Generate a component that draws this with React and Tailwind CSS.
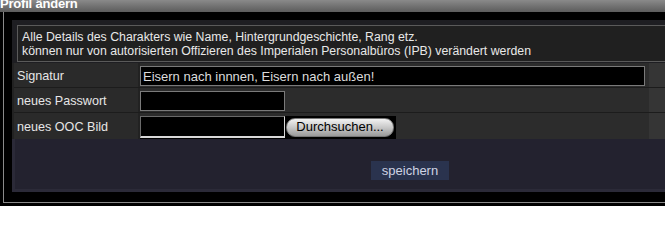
import React from 'react';

const font = { fontFamily: '"Liberation Sans", Arial, sans-serif' };

function Row({ label, children, last }) {
    return (
        <div className={`flex h-[25px] ${last ? 'h-[26px]' : 'border-b border-[#1c1c1c]'}`}>
            <div className="w-[124px] shrink-0 bg-[#2a2a2a] pl-[3px] pt-[2px] flex items-center text-[12.6px] text-[#e6e6e6]">
                {label}
            </div>
            <div className="w-[2px] shrink-0 bg-[#222]" />
            <div className="w-[509px] shrink-0 bg-[#2c2c2c] flex items-center">
                {children}
            </div>
            <div className="flex-1 bg-[#353535]" />
        </div>
    );
}

export default function App() {
    return (
        <div className="w-[665px] h-[206px] overflow-hidden bg-black" style={font}>
            <div className="h-[12px] bg-gradient-to-b from-[#8a8a8a] to-[#5c5c5c] overflow-hidden">
                <span className="block -mt-[4px] text-[13px] font-bold text-white leading-[16px] tracking-[-0.2px]">Profil ändern</span>
            </div>

            <div className="ml-[3px] h-[191px] border-l border-b border-[#8a8a8a] pl-[8px] pt-[8px]">
                <div className="w-[680px] bg-[#222]">
                    <div className="pt-[5px] pl-[5px] pb-[1px] bg-[#1e1e22]">
                        <div className="h-[37px] border border-[#5a5a5a] bg-[#202020] px-[4px] pt-[4px] text-[12.3px] leading-[14px] text-[#e8e8e8]">
                            <p>Alle Details des Charakters wie Name, Hintergrundgeschichte, Rang etz.</p>
                            <p>können nur von autorisierten Offizieren des Imperialen Personalbüros (IPB) verändert werden</p>
                        </div>
                    </div>

                    <div className="pl-[2px] bg-[#222]">
                        <Row label="Signatur">
                            <div className="w-[505px] h-[20px] mt-[2px] bg-black border border-[#7a7a7a] pl-[2px] text-[13px] leading-[19px] text-[#dcdcdc]">
                                Eisern nach innnen, Eisern nach außen!
                            </div>
                        </Row>
                        <Row label="neues Passwort">
                            <div className="w-[145px] h-[20px] mt-[2px] bg-black border border-[#7a7a7a]" />
                        </Row>
                        <Row label="neues OOC Bild" last>
                            <div className="flex items-center h-[23px] mt-[2px] bg-black pr-[2px]">
                                <div className="w-[145px] h-[22px] bg-black border border-t-[#6a6a6a] border-l-[#6a6a6a] border-b-[#d8d8d8] border-r-[#d8d8d8] border-b-2" />
                                <button className="ml-[1px] w-[108px] h-[19px] rounded-[9px] bg-gradient-to-b from-[#f2f2f2] via-[#c8c8c8] to-[#9a9a9a] border border-[#777] text-[13px] leading-[16px] text-black">
                                    Durchsuchen...
                                </button>
                            </div>
                        </Row>
                    </div>

                    <div className="h-[53px] bg-[#23222f] border-l-[3px] border-b-[3px] border-[#2b2a38] pt-[19px]">
                        <div className="ml-[356px]">
                            <button className="w-[78px] h-[19px] bg-[#2a334e] text-[13px] leading-[19px] text-[#cfd3e4]">
                                speichern
                            </button>
                        </div>
                    </div>
                </div>
            </div>
        </div>
    );
}
